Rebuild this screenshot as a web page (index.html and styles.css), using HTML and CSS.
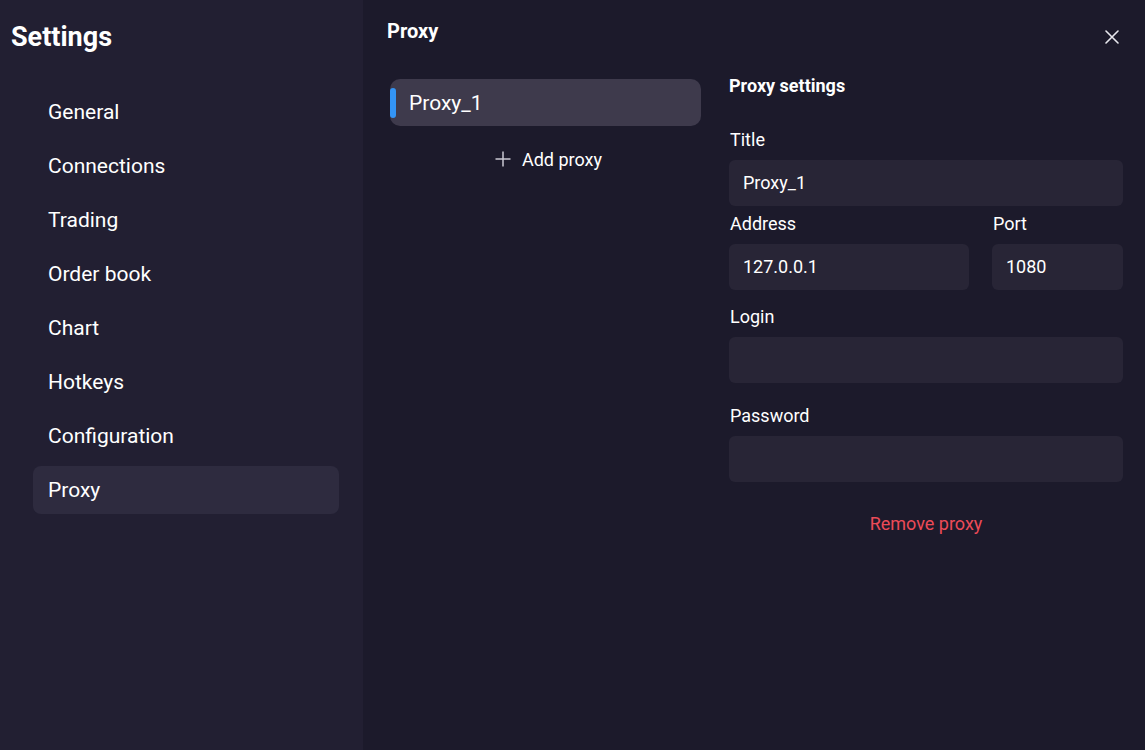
FILE: index.html
```html
<!DOCTYPE html>
<html lang="en">

<head>
    <meta charset="UTF-8">
    <meta name="viewport" content="width=device-width, initial-scale=1.0">
    <title>Settings</title>
    <link rel="stylesheet" href="styles.css">
</head>

<body>
    <div class="settings_window">
        <div class="settings_sidebar">
            <div class="settings_title">Settings</div>
            <div class="settings_nav">
                <div class="nav_item">General</div>
                <div class="nav_item">Connections</div>
                <div class="nav_item">Trading</div>
                <div class="nav_item">Order book</div>
                <div class="nav_item">Chart</div>
                <div class="nav_item">Hotkeys</div>
                <div class="nav_item">Configuration</div>
                <div class="nav_item nav_item_active">Proxy</div>
            </div>
        </div>

        <div class="settings_main">
            <div class="main_title">Proxy</div>
            <div class="close_btn">
                <svg width="14" height="14" viewBox="0 0 14 14">
                    <path d="M1 1 L13 13 M13 1 L1 13" stroke="#e8e8ee" stroke-width="1.6" fill="none" stroke-linecap="round"/>
                </svg>
            </div>

            <div class="proxy_columns">
                <div class="proxy_list">
                    <div class="proxy_card">
                        <div class="proxy_card_bar"></div>
                        <div class="proxy_card_text">Proxy_1</div>
                    </div>
                    <div class="add_proxy">
                        <svg width="16" height="16" viewBox="0 0 16 16">
                            <path d="M8 0.5 V15.5 M0.5 8 H15.5" stroke="#c9c8d2" stroke-width="1.5" fill="none"/>
                        </svg>
                        <span>Add proxy</span>
                    </div>
                </div>

                <div class="proxy_form">
                    <div class="form_title">Proxy settings</div>

                    <div class="field field_title">
                        <div class="field_label">Title</div>
                        <div class="field_input">Proxy_1</div>
                    </div>

                    <div class="field_row">
                        <div class="field field_address">
                            <div class="field_label">Address</div>
                            <div class="field_input">127.0.0.1</div>
                        </div>
                        <div class="field field_port">
                            <div class="field_label">Port</div>
                            <div class="field_input">1080</div>
                        </div>
                    </div>

                    <div class="field field_login">
                        <div class="field_label">Login</div>
                        <div class="field_input"></div>
                    </div>

                    <div class="field field_password">
                        <div class="field_label">Password</div>
                        <div class="field_input"></div>
                    </div>

                    <div class="remove_proxy">Remove proxy</div>
                </div>
            </div>
        </div>
    </div>
</body>

</html>
```

FILE: styles.css
```css
html,
body {
    margin: 0px;
    padding: 0px;
    height: 100%;
}

body {
    font-family: Roboto, "Liberation Sans", sans-serif;
    color: #ffffff;
    background-color: #1c1a2b;
}

.settings_window {
    display: flex;
    height: 750px;
}

.settings_sidebar {
    width: 363px;
    flex-shrink: 0;
    background-color: #221f32;
    padding: 21px 24px 0px 11px;
    box-sizing: border-box;
}

.settings_title {
    font-size: 27px;
    font-weight: 700;
    line-height: 32px;
}

.settings_nav {
    margin-top: 35px;
    margin-left: 22px;
    display: flex;
    flex-direction: column;
    gap: 6px;
}

.nav_item {
    height: 48px;
    line-height: 48px;
    font-size: 21px;
    padding-left: 15px;
    border-radius: 8px;
}

.nav_item_active {
    background-color: #2e2b3f;
}

.settings_main {
    flex: 1;
    position: relative;
    padding: 20px 22px 0px 24px;
    box-sizing: border-box;
}

.main_title {
    font-size: 20px;
    font-weight: 700;
    line-height: 22px;
}

.close_btn {
    position: absolute;
    top: 30px;
    right: 26px;
    width: 14px;
    height: 14px;
}

.close_btn svg {
    display: block;
}

.proxy_columns {
    display: flex;
    gap: 28px;
    margin-top: 33px;
}

.proxy_list {
    width: 311px;
    margin-left: 3px;
    margin-top: 4px;
}

.proxy_card {
    height: 47px;
    background-color: #3e3a4c;
    border-radius: 10px;
    display: flex;
    align-items: center;
}

.proxy_card_bar {
    width: 6px;
    height: 30px;
    border-radius: 3px;
    background-color: #3394f5;
}

.proxy_card_text {
    margin-left: 13px;
    font-size: 21px;
}

.add_proxy {
    margin-top: 21px;
    height: 24px;
    display: flex;
    align-items: center;
    justify-content: center;
    gap: 11px;
    font-size: 18px;
    padding-left: 6px;
}

.add_proxy svg {
    display: block;
}

.proxy_form {
    width: 394px;
    font-size: 18px;
}

.form_title {
    font-weight: 700;
    line-height: 20px;
    margin-top: 1px;
}

.field_label {
    line-height: 20px;
    padding-top: 1px;
    padding-left: 1px;
}

.field_input {
    margin-top: 10px;
    height: 46px;
    line-height: 46px;
    background-color: #282536;
    border-radius: 6px;
    padding-left: 14px;
    box-sizing: border-box;
}

.field_title {
    margin-top: 33px;
}

.field_row {
    display: flex;
    gap: 23px;
    margin-top: 7px;
}

.field_address {
    width: 240px;
}

.field_port {
    flex: 1;
}

.field_login {
    margin-top: 16px;
}

.field_password {
    margin-top: 22px;
}

.remove_proxy {
    margin-top: 32px;
    line-height: 20px;
    text-align: center;
    color: #ec4b58;
}
```
